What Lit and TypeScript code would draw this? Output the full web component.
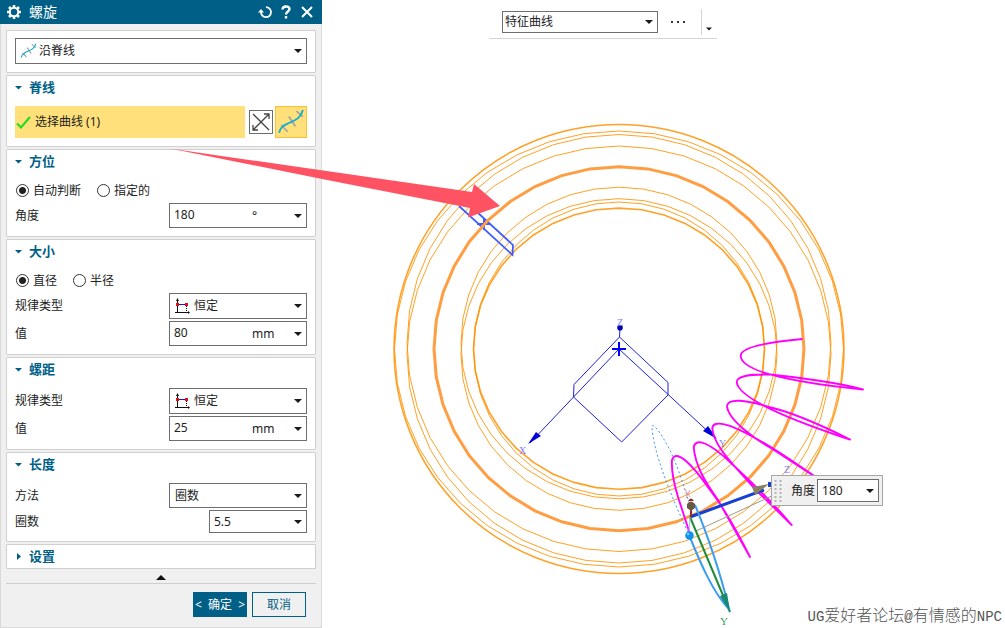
import { LitElement, html, svg, css } from "lit";
import { customElement } from "lit/decorators.js";

const ring = (rx: number, ry: number, cy: number, n = 40) => {
  const pts: string[] = [];
  for (let i = 0; i < n; i++) {
    const a = (i / n) * Math.PI * 2;
    pts.push(`${(619 + rx * Math.sin(a)).toFixed(1)},${(cy - ry * Math.cos(a)).toFixed(1)}`);
  }
  return pts.join(" ");
};

const caret = html`<svg class="caret" viewBox="0 0 8 4" aria-hidden="true"><path d="M0 0h8L4 4z" fill="#1a1a1a" /></svg>`;
const curveIcon = (cls: string) => html`<svg class=${cls} viewBox="0 0 24 24" fill="none" aria-hidden="true">
  <path d="M3 15l6 6M10 7l6 9M17 2l6 5" stroke="#a3a3a3" stroke-width="1.6" />
  <path d="M1 22C3 15 6 15 11 12.500C17 10 21 8 23 1" stroke="#12aed0" stroke-width="1.7" />
</svg>`;
const lawIcon = html`<svg class="law" viewBox="0 0 16 16" aria-hidden="true">
  <path d="M2.500 1v14M0 14.500h14" stroke="#111" stroke-width="1" fill="none" />
  <path d="M2.500 0L1 3h3zM15 14.500l-2-1.500v3z" fill="#111" />
  <path d="M2 6.500h9" stroke="#1616e0" />
  <path d="M11.500 8v6" stroke="#111" stroke-dasharray="1 1" />
  <path d="M1 5h3v3H1zM10 5h3v3h-3z" fill="#e01010" />
</svg>`;

@customElement("app-root")
export class AppRoot extends LitElement {
  static styles = css`
    :host {
      display: flex;
      min-height: 100vh;
      background: #fff;
      color: #222;
      font: 12px/16px "Noto Sans", "Noto Sans CJK SC", sans-serif;
      overflow: hidden;
    }
    * { box-sizing: border-box; }
    input, select, button { font: inherit; color: inherit; margin: 0; border-radius: 0; }
    svg { display: block; flex: none; }
    .dialog {
      flex: 0 0 322px;
      display: flex;
      flex-direction: column;
      background: #f0f0f0;
    }
    .head {
      display: flex;
      align-items: center;
      height: 24px;
      padding: 0 5px 0 6px;
      background: #005f87;
      color: #fff;
    }
    .head h1 { flex: 1; margin: 0 0 0 7px; font-size: 14px; line-height: 20px; font-weight: 400; }
    .tool { display: grid; place-items: center; width: 21px; height: 20px; padding: 0; border: 0; background: none; }
    .body {
      flex: 1;
      display: flex;
      flex-direction: column;
      gap: 2px;
      padding: 6px 5px 0;
      border: solid #d9d9d9;
      border-width: 0 1px 1px;
    }
    .card { background: #fff; border: 1px solid #d0d0d0; border-radius: 1px; padding: 0 8px 8px; }
    .card.plain { padding-top: 7px; }
    .card.closed { padding-bottom: 1px; }
    .title {
      display: flex;
      align-items: center;
      gap: 7px;
      height: 22px;
      margin: 0;
      font-size: 13px;
      font-weight: 700;
      color: #005f87;
    }
    .tri { width: 7px; height: 7px; }
    .rows { display: flex; flex-direction: column; gap: 2px; padding-top: 8px; }
    .row { display: flex; align-items: center; justify-content: space-between; }
    .radios { display: flex; align-items: center; gap: 15px; height: 25px; margin: -2px 0; }
    .radios label { display: flex; align-items: center; gap: 4px; }
    .radios input {
      appearance: none;
      width: 13px;
      height: 13px;
      margin-left: 1px;
      border: 1px solid #333;
      border-radius: 50%;
      background: #fff;
    }
    .radios input:checked { background: radial-gradient(circle, #222 0 3px, #fff 4px); }
    .field {
      display: flex;
      align-items: center;
      height: 25px;
      padding: 0 4px 0 5px;
      border: 1px solid #6e6e6e;
      background: #fff;
      gap: 3px;
    }
    .tall { height: 26px; }
    .short { height: 23px; }
    .w1 { width: 138px; }
    .w2 { width: 98px; }
    .field select, .field input {
      appearance: none;
      flex: 1;
      min-width: 0;
      width: 0;
      height: 20px;
      padding: 0;
      border: 0;
      outline: 0;
      background: none;
    }
    .field input { height: 24px; padding-bottom: 2px; margin-left: -1px; }
    .short input { height: 20px; padding-bottom: 0; }
    .unit { width: 39px; }
    .caret { width: 8px; height: 4px; pointer-events: none; }
    .law { width: 16px; height: 16px; }
    .mini { width: 17px; height: 16px; }
    .plain .field { gap: 2px; padding-left: 4px; }
    .big { width: 26px; height: 26px; }
    .pick { display: flex; align-items: center; }
    .picked {
      flex: 1;
      display: flex;
      align-items: center;
      gap: 4px;
      height: 32px;
      margin-right: 4px;
      padding: 0 1px;
      border: 0;
      background: #ffe07a;
      text-align: left;
    }
    .flip { width: 24px; height: 24px; padding: 1px; border: 1px solid #6e6e6e; background: #fff; margin-right: 2px; }
    .curve { width: 32px; height: 32px; padding: 2px; border: 1px solid #fbc02d; background: #ffe07a; }
    .more { display: grid; place-items: center; width: 100%; height: 12px; padding: 0; border: 0; background: none; }
    .foot {
      display: flex;
      justify-content: flex-end;
      gap: 5px;
      padding: 8px 10px 10px 0;
      border-top: 1px solid #cfcfcf;
    }
    .btn { width: 54px; height: 25px; padding: 0; border: 1px solid #005f87; background: #f0f0f0; color: #005f87; white-space: pre; }
    .btn.ok { background: #005f87; color: #fff; }
    .view { position: relative; flex: 1; min-width: 0; }
    .scene { position: absolute; left: 0; top: 0; width: 683px; height: 628px; overflow: visible; pointer-events: none; }
    .bar {
      position: relative;
      display: flex;
      align-items: center;
      width: 228px;
      height: 39px;
      margin-left: 167px;
      padding: 5px 4px 0 13px;
      border-bottom: 1px solid #d5d5d5;
    }
    .bar .field { width: 156px; height: 22px; padding: 0 4px 0 2px; }
    .dots { width: 43px; height: 22px; padding: 0 3px 0 0; border: 0; background: none; display: grid; place-items: center; }
    .drop { height: 26px; padding: 14px 0 0 4px; border: 0; border-left: 1px solid #d5d5d5; background: none; }
    .drop .caret { width: 6px; }
    .float {
      position: absolute;
      left: 449px;
      top: 475px;
      display: flex;
      align-items: center;
      gap: 2px;
      height: 31px;
      padding: 0 3px 0 2px;
      border: 1px solid #a6a6a6;
      background: #f0f0f0;
    }
    .grip { margin-right: 7px; }
    .float .field { width: 62px; height: 23px; }
    .float input { height: 20px; padding-bottom: 0; }
    .mark {
      position: absolute;
      right: 3px;
      bottom: 1px;
      font: 300 16px/20px "Noto Sans CJK SC", sans-serif;
      color: #555;
      white-space: nowrap;
    }
    .mark span { font-family: "Liberation Mono", monospace; font-size: 14px; }
  `;

  private heading(text: string, open = true) {
    return html`<h2 class="title">
      <svg class="tri" viewBox="0 0 7 7" aria-hidden="true"><path d=${open ? "M0 2h7L3.500 5.500z" : "M2 0l4 3.500L2 7z"} fill="#005f87" /></svg>${text}
    </h2>`;
  }

  private law(id: string) {
    return html`<div class="row"><label for=${id}>规律类型</label>
      <div class="field tall w1">${lawIcon}<select id=${id}><option>恒定</option></select>${caret}</div></div>`;
  }

  private value(id: string, label: string, value: string, unit: string) {
    return html`<div class="row"><label for=${id}>${label}</label>
      <div class="field w1"><input id=${id} .value=${value} /><span class="unit">${unit}</span>${caret}</div></div>`;
  }

  private radios(name: string, a: string, b: string) {
    return html`<div class="radios">
      <label><input type="radio" name=${name} checked />${a}</label>
      <label><input type="radio" name=${name} />${b}</label>
    </div>`;
  }

  private scene() {
    return svg`
      <g fill="none" stroke="#ff9100" stroke-width="1" stroke-opacity=".85">
        <ellipse cx="619" cy="349" rx="225" ry="224.500" stroke-width="1.500" />
        <polygon points=${ring(224.5, 218, 349)} />
        <polygon points=${ring(212, 208.5, 343)} />
        <polygon points=${ring(212, 208.5, 354.5)} />
        <polygon points=${ring(158, 155.8, 343)} />
        <polygon points=${ring(158, 155.8, 354.5)} />
        <polygon points=${ring(145.5, 147, 349)} />
        <polygon points=${ring(145.5, 140.6, 348.7)} stroke-width="1.600" />
      </g>
      <path d="M459 206L512.500 255L513 245L477 212" fill="none" stroke="#3d5cff" stroke-width="1.700" />
      <path d="M477 224h13M484 218v12" stroke="#3d5cff" stroke-width="2" />
      <polygon points=${ring(185, 182, 348.7)} fill="none" stroke="#ff9d42" stroke-width="3" />
      <g fill="none" stroke="#2020e0" stroke-width="1">
        <path d="M620 328L619.500 337L574 384.500L573.500 397L621.700 442L668 395V382.500L619.500 337M619 349L530 443M619 349L714 437" />
        <path d="M612 349h14M619 342v14" stroke-width="2" stroke="#0000f0" />
      </g>
      <circle cx="620" cy="327.700" r="2.800" fill="#0000b4" />
      <path d="M528 444L536 432L541 436zM717 439L703 431L708 426z" fill="#0000d8" />
      <g font-family="Liberation Serif, serif" font-size="10" fill="#7d7dff">
        <text x="617" y="326">Z</text><text x="519" y="454">X</text><text x="719" y="447">Y</text><text x="784" y="473">Z</text>
      </g>
      <g fill="none" stroke="#ff00ff" stroke-width="1.900" stroke-linejoin="round">
        <path d="M802.500 339C770 342 741 347 740.700 355.700C741 371 790 382 863 389.500C840 383 796 377 770 374.500C748 374 737 376 736.700 382C738 397 785 418 850 439.500C815 422 788 411 767 406.500C746 400 728 398 727 406C728 420 755 439 771.700 448.500L820 480C795 463 776 449 755 438C730 424 713 419 712.300 428.500C714 447 735 466 753 487L791.700 525C770 499 750 481 731 463C710 443 696 437 693.700 447C695 465 705 482 718 500L750 557C736 529 724 508 710 490C692 464 676 448 672 460C671 473 675 487 678 497L690 534" />
      </g>
      <path d="M688 532C672 499 652 449 652 426C655 422 672 450 680 475L690 505" fill="none" stroke="#3b98f5" stroke-width="1" stroke-dasharray="2 2.500" />
      <path d="M696 531L776 494" stroke="#a09a80" />
      <path d="M690 517L764 490" stroke="#143fd0" stroke-width="3" />
      <path d="M690 517L730 612" stroke="#1d8c35" stroke-width="2" />
      <path d="M695 505C706 531 721 574 729 609C713 593 700 562 689 535" fill="none" stroke="#3b9df2" stroke-width="2" />
      <path d="M730 612L720 596L727 593z" fill="#168a70" />
      <path d="M769 484L752 487L755 495z" fill="#8c8062" />
      <path d="M768 482h4v5h-4z" fill="#143fd0" />
      <path d="M691 517V503" stroke="#9c2a20" stroke-width="2" />
      <path d="M690 517L689 532" stroke="#9cc2f5" />
      <path d="M688 501Q691 496 694 501z" fill="#8c2a2a" />
      <path d="M687 504Q691 499 695 504V508L691 511L687 508z" fill="#6a5740" />
      <circle cx="689.500" cy="535.500" r="4.300" fill="#1093e8" />
      <circle cx="688" cy="534" r="1.300" fill="#7cc8f8" />
      <path d="M684 488l6 9M690 490l-4 8" stroke="#e59a9a" />
      <text x="720" y="625" font-family="Liberation Serif, serif" font-size="11" fill="#3c9c55">Y</text>
      <path d="M170 148.500L472 192L474 184L500 206L468 217.500L470 208L322 179z" fill="#ff5263" />
    `;
  }

  render() {
    return html`
      <section class="dialog">
        <header class="head">
          <svg width="16" height="16" viewBox="0 0 16 16" aria-hidden="true">
            <g stroke="#fff" stroke-width="2.600"><path d="M8 1v14M1 8h14M3 3l10 10M13 3L3 13" /></g>
            <circle cx="8" cy="8" r="4.200" fill="#005f87" stroke="#fff" stroke-width="2" />
          </svg>
          <h1>螺旋</h1>
          <button class="tool" aria-label="重置"><svg width="14" height="14" viewBox="0 0 14 14" fill="none" stroke="#fff" stroke-width="1.800"><path d="M8 2.200A5 5 0 1 1 3 7" /><path d="M0 7.500L3 4L6 7.500z" fill="#fff" stroke="none" /></svg></button>
          <button class="tool" aria-label="帮助"><svg width="10" height="14" viewBox="0 0 10 14" fill="none" stroke="#fff" stroke-width="2.400"><path d="M1.500 4.500C1.500 .5 8.500 .5 8.500 4C8.500 6.500 5 6.500 5 9.500M5 11v2.500" /></svg></button>
          <button class="tool" aria-label="关闭"><svg width="12" height="12" viewBox="0 0 12 12" stroke="#fff" stroke-width="2"><path d="M1 1l10 10M11 1L1 11" /></svg></button>
        </header>
        <div class="body">
          <div class="card plain">
            <div class="field tall">${curveIcon("mini")}<select aria-label="类型"><option>沿脊线</option></select>${caret}</div>
          </div>
          <div class="card">
            ${this.heading("脊线")}
            <div class="rows"><div class="pick">
              <button class="picked"><svg width="15" height="15" viewBox="0 0 15 15" fill="none" stroke="#22dd22" stroke-width="2.200"><path d="M1 8.500L5 12.500L14 2" /></svg>选择曲线 (1)</button>
              <button class="flip" aria-label="反向"><svg width="20" height="20" viewBox="0 0 20 20" fill="none" stroke="#444" stroke-width="1.300"><path d="M2 2l16 16M18 2L2 18M13 2h5v5M2 13v5h5" /></svg></button>
              <button class="curve" aria-label="曲线">${curveIcon("big")}</button>
            </div></div>
          </div>
          <div class="card">
            ${this.heading("方位")}
            <div class="rows">${this.radios("orient", "自动判断", "指定的")}${this.value("angle", "角度", "180", "°")}</div>
          </div>
          <div class="card">
            ${this.heading("大小")}
            <div class="rows">${this.radios("size", "直径", "半径")}${this.law("law1")}${this.value("v1", "值", "80", "mm")}</div>
          </div>
          <div class="card">
            ${this.heading("螺距")}
            <div class="rows">${this.law("law2")}${this.value("v2", "值", "25", "mm")}</div>
          </div>
          <div class="card">
            ${this.heading("长度")}
            <div class="rows">
              <div class="row"><label for="method">方法</label><div class="field w1"><select id="method"><option>圈数</option></select>${caret}</div></div>
              <div class="row"><label for="turns">圈数</label><div class="field short w2"><input id="turns" .value=${"5.5"} />${caret}</div></div>
            </div>
          </div>
          <div class="card closed">${this.heading("设置", false)}</div>
          <div>
            <button class="more" aria-label="收起"><svg width="10" height="5" viewBox="0 0 10 5"><path d="M0 5h10L5 0z" fill="#111" /></svg></button>
            <div class="foot"><button class="btn ok">&lt;  确定  &gt;</button><button class="btn">取消</button></div>
          </div>
        </div>
      </section>
      <main class="view">
        <svg class="scene" viewBox="322 0 683 628" aria-hidden="true">${this.scene()}</svg>
        <div class="bar">
          <div class="field"><select aria-label="曲线规则"><option>特征曲线</option></select>${caret}</div>
          <button class="dots" aria-label="更多"><svg width="16" height="2" viewBox="0 0 16 2"><path d="M1 0h2v2H1zM7 0h2v2H7zM13 0h2v2h-2z" fill="#333" /></svg></button>
          <button class="drop" aria-label="选项">${caret}</button>
        </div>
        <div class="float">
          <svg class="grip" width="8" height="24" viewBox="0 0 8 24" aria-hidden="true"><path d="M1.500 1v22M6.500 1v22" stroke="#b4b4b4" stroke-width="2" stroke-dasharray="2 2" /></svg>
          <label for="fa">角度</label>
          <div class="field"><input id="fa" .value=${"180"} />${caret}</div>
        </div>
        <div class="mark"><span>UG</span>爱好者论坛<span>@</span>有情感的<span>NPC</span></div>
      </main>
    `;
  }
}
